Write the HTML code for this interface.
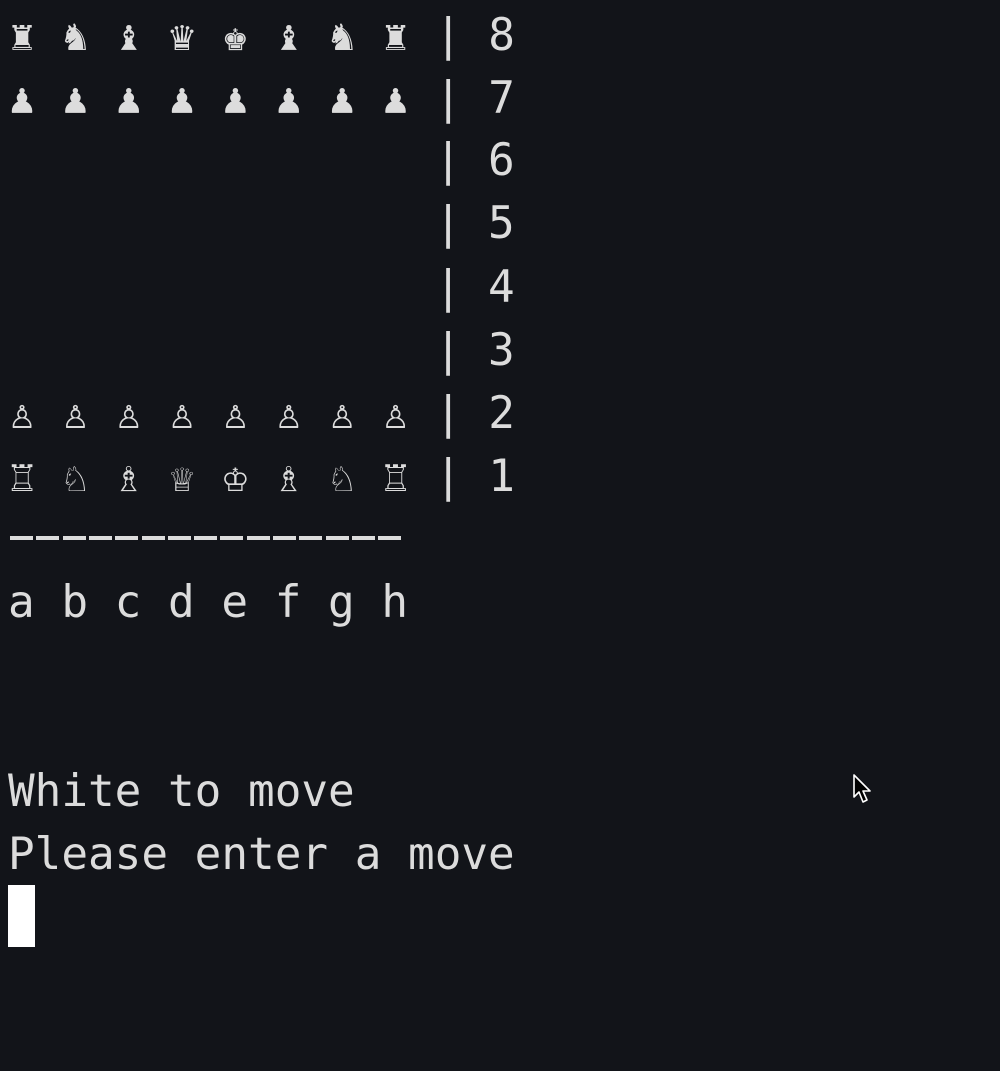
<!DOCTYPE html>
<html><head><meta charset="utf-8"><style>
html,body{margin:0;padding:0;background:#121419;width:1000px;height:1071px;overflow:hidden}
.l{position:absolute;left:8px;height:63px;line-height:63px;white-space:pre;font-family:"DejaVu Sans Mono","Liberation Mono",monospace;font-size:44.3px;color:#dcdcdc}
.c{display:inline-block;width:53.36px;text-align:left;font-size:42px;overflow:visible}
.c span{display:inline-block;width:28px;text-align:center}
.d{position:absolute;top:536px;height:4px;width:23px;background:#dcdcdc}
.cur{position:absolute;left:8px;top:885px;width:27px;height:62px;background:#fff}
</style></head><body>
<div class="l" style="top:4px"><span class="c"><span>♜</span></span><span class="c"><span>♞</span></span><span class="c"><span>♝</span></span><span class="c"><span>♛</span></span><span class="c"><span>♚</span></span><span class="c"><span>♝</span></span><span class="c"><span>♞</span></span><span class="c"><span>♜</span></span>| 8</div>
<div class="l" style="top:67px"><span class="c"><span>♟</span></span><span class="c"><span>♟</span></span><span class="c"><span>♟</span></span><span class="c"><span>♟</span></span><span class="c"><span>♟</span></span><span class="c"><span>♟</span></span><span class="c"><span>♟</span></span><span class="c"><span>♟</span></span>| 7</div>
<div class="l" style="top:129px">                | 6</div>
<div class="l" style="top:192px">                | 5</div>
<div class="l" style="top:256px">                | 4</div>
<div class="l" style="top:319px">                | 3</div>
<div class="l" style="top:382px"><span class="c"><span>♙</span></span><span class="c"><span>♙</span></span><span class="c"><span>♙</span></span><span class="c"><span>♙</span></span><span class="c"><span>♙</span></span><span class="c"><span>♙</span></span><span class="c"><span>♙</span></span><span class="c"><span>♙</span></span>| 2</div>
<div class="l" style="top:445px"><span class="c"><span>♖</span></span><span class="c"><span>♘</span></span><span class="c"><span>♗</span></span><span class="c"><span>♕</span></span><span class="c"><span>♔</span></span><span class="c"><span>♗</span></span><span class="c"><span>♘</span></span><span class="c"><span>♖</span></span>| 1</div>
<div class="d" style="left:10px"></div><div class="d" style="left:36.3px"></div><div class="d" style="left:62.6px"></div><div class="d" style="left:88.9px"></div><div class="d" style="left:115.2px"></div><div class="d" style="left:141.5px"></div><div class="d" style="left:167.8px"></div><div class="d" style="left:194.1px"></div><div class="d" style="left:220.4px"></div><div class="d" style="left:246.7px"></div><div class="d" style="left:273px"></div><div class="d" style="left:299.3px"></div><div class="d" style="left:325.6px"></div><div class="d" style="left:351.9px"></div><div class="d" style="left:378.2px"></div>
<div class="l" style="top:571px">a b c d e f g h</div>
<div class="l" style="top:760px">White to move</div>
<div class="l" style="top:823px">Please enter a move</div>
<div class="cur"></div>
<svg style="position:absolute;left:850px;top:772px" width="30" height="36" viewBox="0 0 30 36">
<path d="M4 3 L4 25 L9 20 L13 30 L17 28 L13 19 L20 19 Z" fill="#000" stroke="#fff" stroke-width="1.6" stroke-linejoin="round"/>
</svg>
</body></html>
